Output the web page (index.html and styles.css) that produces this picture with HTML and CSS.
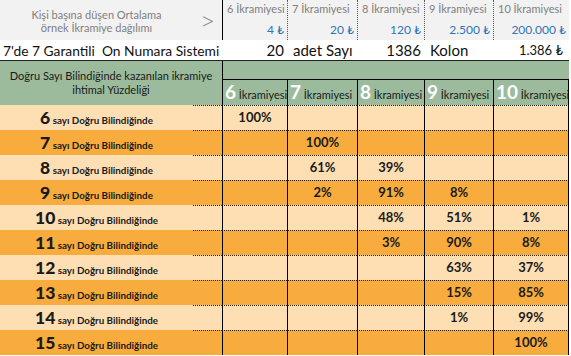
FILE: index.html
```html
<!DOCTYPE html>
<html lang="tr">
<head>
<meta charset="utf-8">
<title>On Numara Sistemi</title>
<link rel="stylesheet" href="styles.css">
</head>
<body>
<div class="sheet">
  <div class="prize-head">
    <div class="ph-label">Kişi başına düşen Ortalama<br>örnek İkramiye dağılımı</div>
    <div class="ph-arrow">&gt;</div>
    <div class="ph-cell first"><span class="ph-title">6 İkramiyesi</span><span class="ph-amt">4 ₺</span></div>
    <div class="ph-cell"><span class="ph-title">7 İkramiyesi</span><span class="ph-amt">20 ₺</span></div>
    <div class="ph-cell"><span class="ph-title">8 İkramiyesi</span><span class="ph-amt">120 ₺</span></div>
    <div class="ph-cell"><span class="ph-title">9 İkramiyesi</span><span class="ph-amt">2.500 ₺</span></div>
    <div class="ph-cell"><span class="ph-title">10 İkramiyesi</span><span class="ph-amt">200.000 ₺</span></div>
  </div>

  <div class="summary">
    <div class="sm-title">7'de 7 Garantili&nbsp; On Numara Sistemi</div>
    <div class="sm-num">20</div>
    <div class="sm-text">adet Sayı</div>
    <div class="sm-num">1386</div>
    <div class="sm-text">Kolon</div>
    <div class="sm-total">1.386 ₺</div>
  </div>

  <div class="matrix">
    <div class="mx-label">Doğru Sayı Bilindiğinde kazanılan ikramiye<br>ihtimal Yüzdeliği</div>
    <div class="mx-top"></div>
    <div class="mx-h"><b>6</b> İkramiyesi</div>
    <div class="mx-h"><b>7</b> İkramiyesi</div>
    <div class="mx-h"><b>8</b> İkramiyesi</div>
    <div class="mx-h"><b>9</b> İkramiyesi</div>
    <div class="mx-h last"><b>10</b> İkramiyesi</div>

    <div class="row light"><div class="rl"><b>6</b> sayı Doğru Bilindiğinde</div><div class="gap"></div><div class="v">100%</div><div class="v"></div><div class="v"></div><div class="v"></div><div class="v last"></div></div>
    <div class="row dark"><div class="rl"><b>7</b> sayı Doğru Bilindiğinde</div><div class="gap"></div><div class="v"></div><div class="v">100%</div><div class="v"></div><div class="v"></div><div class="v last"></div></div>
    <div class="row light"><div class="rl"><b>8</b> sayı Doğru Bilindiğinde</div><div class="gap"></div><div class="v"></div><div class="v">61%</div><div class="v">39%</div><div class="v"></div><div class="v last"></div></div>
    <div class="row dark"><div class="rl"><b>9</b> sayı Doğru Bilindiğinde</div><div class="gap"></div><div class="v"></div><div class="v">2%</div><div class="v">91%</div><div class="v">8%</div><div class="v last"></div></div>
    <div class="row light"><div class="rl"><b>10</b> sayı Doğru Bilindiğinde</div><div class="gap"></div><div class="v"></div><div class="v"></div><div class="v">48%</div><div class="v">51%</div><div class="v last">1%</div></div>
    <div class="row dark"><div class="rl"><b>11</b> sayı Doğru Bilindiğinde</div><div class="gap"></div><div class="v"></div><div class="v"></div><div class="v">3%</div><div class="v">90%</div><div class="v last">8%</div></div>
    <div class="row light"><div class="rl"><b>12</b> sayı Doğru Bilindiğinde</div><div class="gap"></div><div class="v"></div><div class="v"></div><div class="v"></div><div class="v">63%</div><div class="v last">37%</div></div>
    <div class="row dark"><div class="rl"><b>13</b> sayı Doğru Bilindiğinde</div><div class="gap"></div><div class="v"></div><div class="v"></div><div class="v"></div><div class="v">15%</div><div class="v last">85%</div></div>
    <div class="row light"><div class="rl"><b>14</b> sayı Doğru Bilindiğinde</div><div class="gap"></div><div class="v"></div><div class="v"></div><div class="v"></div><div class="v">1%</div><div class="v last">99%</div></div>
    <div class="row dark"><div class="rl"><b>15</b> sayı Doğru Bilindiğinde</div><div class="gap"></div><div class="v"></div><div class="v"></div><div class="v"></div><div class="v"></div><div class="v last">100%</div></div>
  </div>
</div>
</body>
</html>
```

FILE: styles.css
```css
* { box-sizing: border-box; }
html, body { margin: 0; padding: 0; background: #fff; }
body { font-family: Lato, "Noto Sans", "DejaVu Sans", sans-serif; color: #111; }

.sheet { width: 571px; padding-right: 2px; }

.prize-head, .summary, .matrix, .row {
  display: grid;
  grid-template-columns: 193px 29px 65px 70px 67px 69px 76px;
}

/* top prize header */
.prize-head { background: #f2f2f2; height: 40px; }
.ph-label {
  color: #7f7f7f; font-size: 11px; line-height: 13px;
  text-align: center; padding-top: 8px;
}
.ph-arrow {
  color: #8c8c8c; font-size: 26px; line-height: 40px; font-weight: 300;
  padding-left: 7px;
}
.ph-cell {
  display: flex; flex-direction: column; justify-content: space-between;
  border-left: 1px dotted #555; padding: 2px 3px 3px 4px;
}
.ph-cell.first { border-left: 1px solid #000; }
.ph-title { color: #7f7f7f; font-size: 11px; line-height: 14px; white-space: nowrap; }
.ph-amt { color: #2e75b6; font-size: 12px; line-height: 15px; text-align: right; }

/* summary line */
.summary { height: 21px; border-bottom: 1px solid #222; align-items: center; font-size: 15px; }
.sm-title { grid-column: 1 / 3; padding-left: 3px; white-space: nowrap; font-size: 13.8px; }
.sm-num { text-align: right; padding-right: 3px; }
.sm-text { padding-left: 6px; white-space: nowrap; }
.sm-total { text-align: right; padding-right: 6px; font-size: 13px; }

/* matrix */
.matrix { grid-template-rows: 19px 25px auto; background: #9bbb9c; }
.mx-label {
  grid-column: 1 / 3; grid-row: 1 / 3;
  font-size: 11px; line-height: 14px; color: #1a1a1a;
  text-align: center; padding-top: 8px;
}
.mx-top {
  grid-column: 3 / 8; grid-row: 1;
  border-left: 1px solid #000; border-bottom: 1px solid #000;
}
.mx-h {
  grid-row: 2; border-left: 1px solid #000;
  font-size: 11px; color: #1a1a1a; white-space: nowrap;
  padding-left: 2px; line-height: 24px;
}
.mx-h b { color: #fff; font-size: 19px; font-weight: 700; }
.mx-h.last { border-right: 1px solid #000; }

.row { grid-column: 1 / 8; height: 25px; }
.row.light { background: #fddfb3; }
.row.dark { background: #f8ac3e; }
.rl {
  text-align: center; font-weight: 700; font-size: 9.8px; color: #1a1a1a;
  line-height: 25px; white-space: nowrap;
}
.rl b { font-size: 17.5px; }
.gap, .v { border-top: 1px dotted #222; }
.v {
  border-left: 1px solid #000; text-align: center;
  font-weight: 700; font-size: 13px; line-height: 23px; color: #1a1a1a;
}
.v.last { border-right: 1px solid #000; }
.row:last-child .gap, .row:last-child .v { border-bottom: 1px dotted #222; }
```
